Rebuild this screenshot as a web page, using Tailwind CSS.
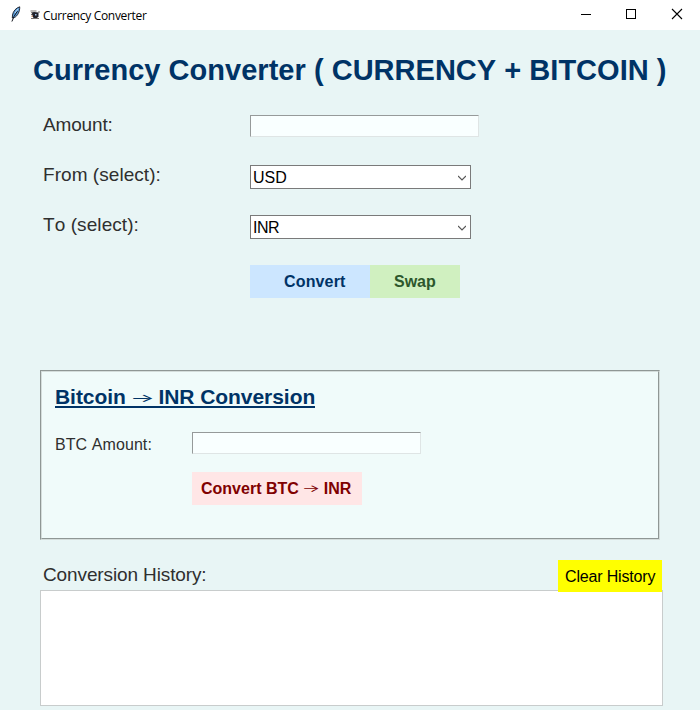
<!DOCTYPE html>
<html lang="en">
<head>
<meta charset="utf-8">
<title>Currency Converter</title>
<script src="https://cdn.jsdelivr.net/npm/@tailwindcss/browser@4"></script>
</head>
<body class="w-[700px] h-[710px] overflow-hidden bg-[#e8f5f5] font-['Liberation_Sans',Arial,sans-serif] text-[#2f2f2f] [font-kerning:none]">
<header class="flex h-[30px] items-center bg-white text-black">
  <svg class="ml-[10px] h-4 w-[12px] -translate-y-px" viewBox="0 0 12 16">
    <path d="M9.700 .8C6 2 3.200 5 2.500 9L2.300 12l2.200-.5C7.500 10 10 5.500 9.700.8Z" fill="#5b9bd8" stroke="#151a24" stroke-width=".9"/>
    <path d="M7.500 5 4 10.500 1.900 15.500" fill="none" stroke="#10141c" stroke-width="1"/>
    <path d="M8 2.800 5 7" stroke="#b7daf5" stroke-width="1"/>
  </svg>
  <svg class="ml-[8px] h-[10px] w-[10px]" viewBox="0 0 10 10">
    <path d="M.5 1h6M1 2.500l2 .8M1 4.500h2M1 8.500h8M9 1v2" stroke="#77706c" stroke-width="1"/>
    <path d="M2 2.500 4 2 8.500 2.500 8.500 6.500 7 8H3.500L2.500 6Z" fill="#20212a"/>
    <path d="M5 4h1.500v1.500H5z" fill="#a8c5e8"/>
    <path d="M1.500 5.500h1.500v1.500H1.500z" fill="#c28b68"/>
  </svg>
  <span class="ml-[3px] w-[110px] translate-y-px whitespace-nowrap font-['Open_Sans',sans-serif] text-[12px] leading-[16px] tracking-[-0.33px]">Currency Converter</span>
  <div class="ml-auto flex h-full">
    <svg class="h-[30px] w-[46px]" viewBox="0 0 46 30" shape-rendering="crispEdges"><path d="M19 14.500h10" stroke="#000"/></svg>
    <svg class="h-[30px] w-[46px]" viewBox="0 0 46 30" shape-rendering="crispEdges"><path d="M18.500 9.500h9v9h-9z" fill="none" stroke="#000"/></svg>
    <svg class="h-[30px] w-[46px]" viewBox="0 0 46 30"><path d="M18 9l10 10M28 9 18 19" stroke="#000" stroke-width="1.100"/></svg>
  </div>
</header>
<main class="flex flex-col">
  <h1 class="ml-[33px] mt-[20px] h-[40px] whitespace-nowrap text-[29px] font-bold leading-[40px] tracking-[0.025px] text-[#003366]"><span>Currency Converter ( CURRENCY + BITCOIN )</span></h1>
  <div class="mt-[25px] flex h-[50px] items-start pl-[43px]">
    <label class="w-[207px] text-[19px] leading-[20px] tracking-[-0.15px]"><span>Amount:</span></label>
    <div class="h-[22px] w-[229px] border border-[#dfe5e5] border-t-[#969a9a] border-l-[#969a9a] bg-[#f9ffff]"></div>
  </div>
  <div class="flex h-[50px] items-start pl-[43px]">
    <label class="w-[207px] text-[19px] leading-[20px] tracking-[0.05px]"><span>From (select):</span></label>
    <div class="flex h-[24px] w-[221px] items-center justify-between border border-[#7a7a7a] bg-white pl-[2px] pr-[4px] text-[16px] leading-[22px] text-black"><span class="translate-y-px">USD</span>
      <svg class="h-[6px] w-[8px] translate-y-px" viewBox="0 0 8 6"><path d="M0 1l4 4 4-4" fill="none" stroke="#555" stroke-width="1.200"/></svg></div>
  </div>
  <div class="flex h-[50px] items-start pl-[43px]">
    <label class="w-[207px] text-[19px] leading-[20px] tracking-[0.08px]"><span>To (select):</span></label>
    <div class="flex h-[24px] w-[221px] items-center justify-between border border-[#7a7a7a] bg-white pl-[2px] pr-[4px] text-[16px] leading-[22px] text-black"><span class="translate-y-px tracking-[-0.5px]">INR</span>
      <svg class="h-[6px] w-[8px] translate-y-px" viewBox="0 0 8 6"><path d="M0 1l4 4 4-4" fill="none" stroke="#555" stroke-width="1.200"/></svg></div>
  </div>
  <div class="ml-[250px] flex h-[33px] text-[16px] font-bold leading-[33px]">
    <button class="w-[120px] bg-[#cce6ff] pl-[34px] text-left font-bold tracking-[0.15px] text-[#003366]"><span>Convert</span></button>
    <button class="w-[90px] bg-[#d0f0c0] pl-[24px] text-left font-bold text-[#2d572c]"><span>Swap</span></button>
  </div>
  <section class="ml-[40px] mt-[72px] h-[170px] w-[620px] border border-[#d4dddb] border-t-[#8f9795] border-l-[#8f9795]">
    <div class="h-full border border-[#8f9795] border-t-[#d4dddb] border-l-[#d4dddb] bg-[#f0fbfa] pl-[13px] pt-[12px]">
      <h2 class="h-[28px] w-[260px] whitespace-nowrap text-[21px] font-bold leading-[26px] tracking-[-0.05px] text-[#003366]"><span class="inline-block h-[24px] w-[260px] border-b-2 border-[#003366]">Bitcoin <span class="inline-block w-[21px] translate-y-px scale-x-[1.300] scale-y-[0.600] text-center font-['Inter'] text-[20px] font-normal leading-[20px]">→</span> INR Conversion</span></h2>
      <div class="mt-[20px] flex h-[22px]">
        <label class="w-[137px] text-[16px] leading-[25px] tracking-[0.08px]"><span>BTC Amount:</span></label>
        <div class="h-[22px] w-[229px] border border-[#dfe5e5] border-t-[#969a9a] border-l-[#969a9a] bg-[#f9ffff]"></div>
      </div>
      <button class="ml-[137px] mt-[18px] block h-[33px] w-[170px] whitespace-nowrap bg-[#ffe6e6] pl-[9px] text-left text-[16px] font-bold leading-[33px] text-[#800000]"><span>Convert BTC <span class="inline-block w-[16px] scale-x-[1.300] scale-y-[0.650] text-center font-['Inter'] text-[15px] font-normal leading-[16px]">→</span> INR</span></button>
    </div>
  </section>
  <div class="mt-[20px] flex h-[30px] justify-between pl-[43px] pr-[38px]">
    <h3 class="text-[19px] leading-[30px] tracking-[-0.12px]"><span>Conversion History:</span></h3>
    <button class="relative z-10 h-[32px] w-[104px] whitespace-nowrap bg-[#ffff00] pl-[7px] text-left text-[16px] leading-[33px] tracking-[-0.17px] text-black"><span>Clear History</span></button>
  </div>
  <div class="ml-[40px] h-[116px] w-[623px] border border-[#c8cccc] bg-white"></div>
</main>
</body>
</html>
